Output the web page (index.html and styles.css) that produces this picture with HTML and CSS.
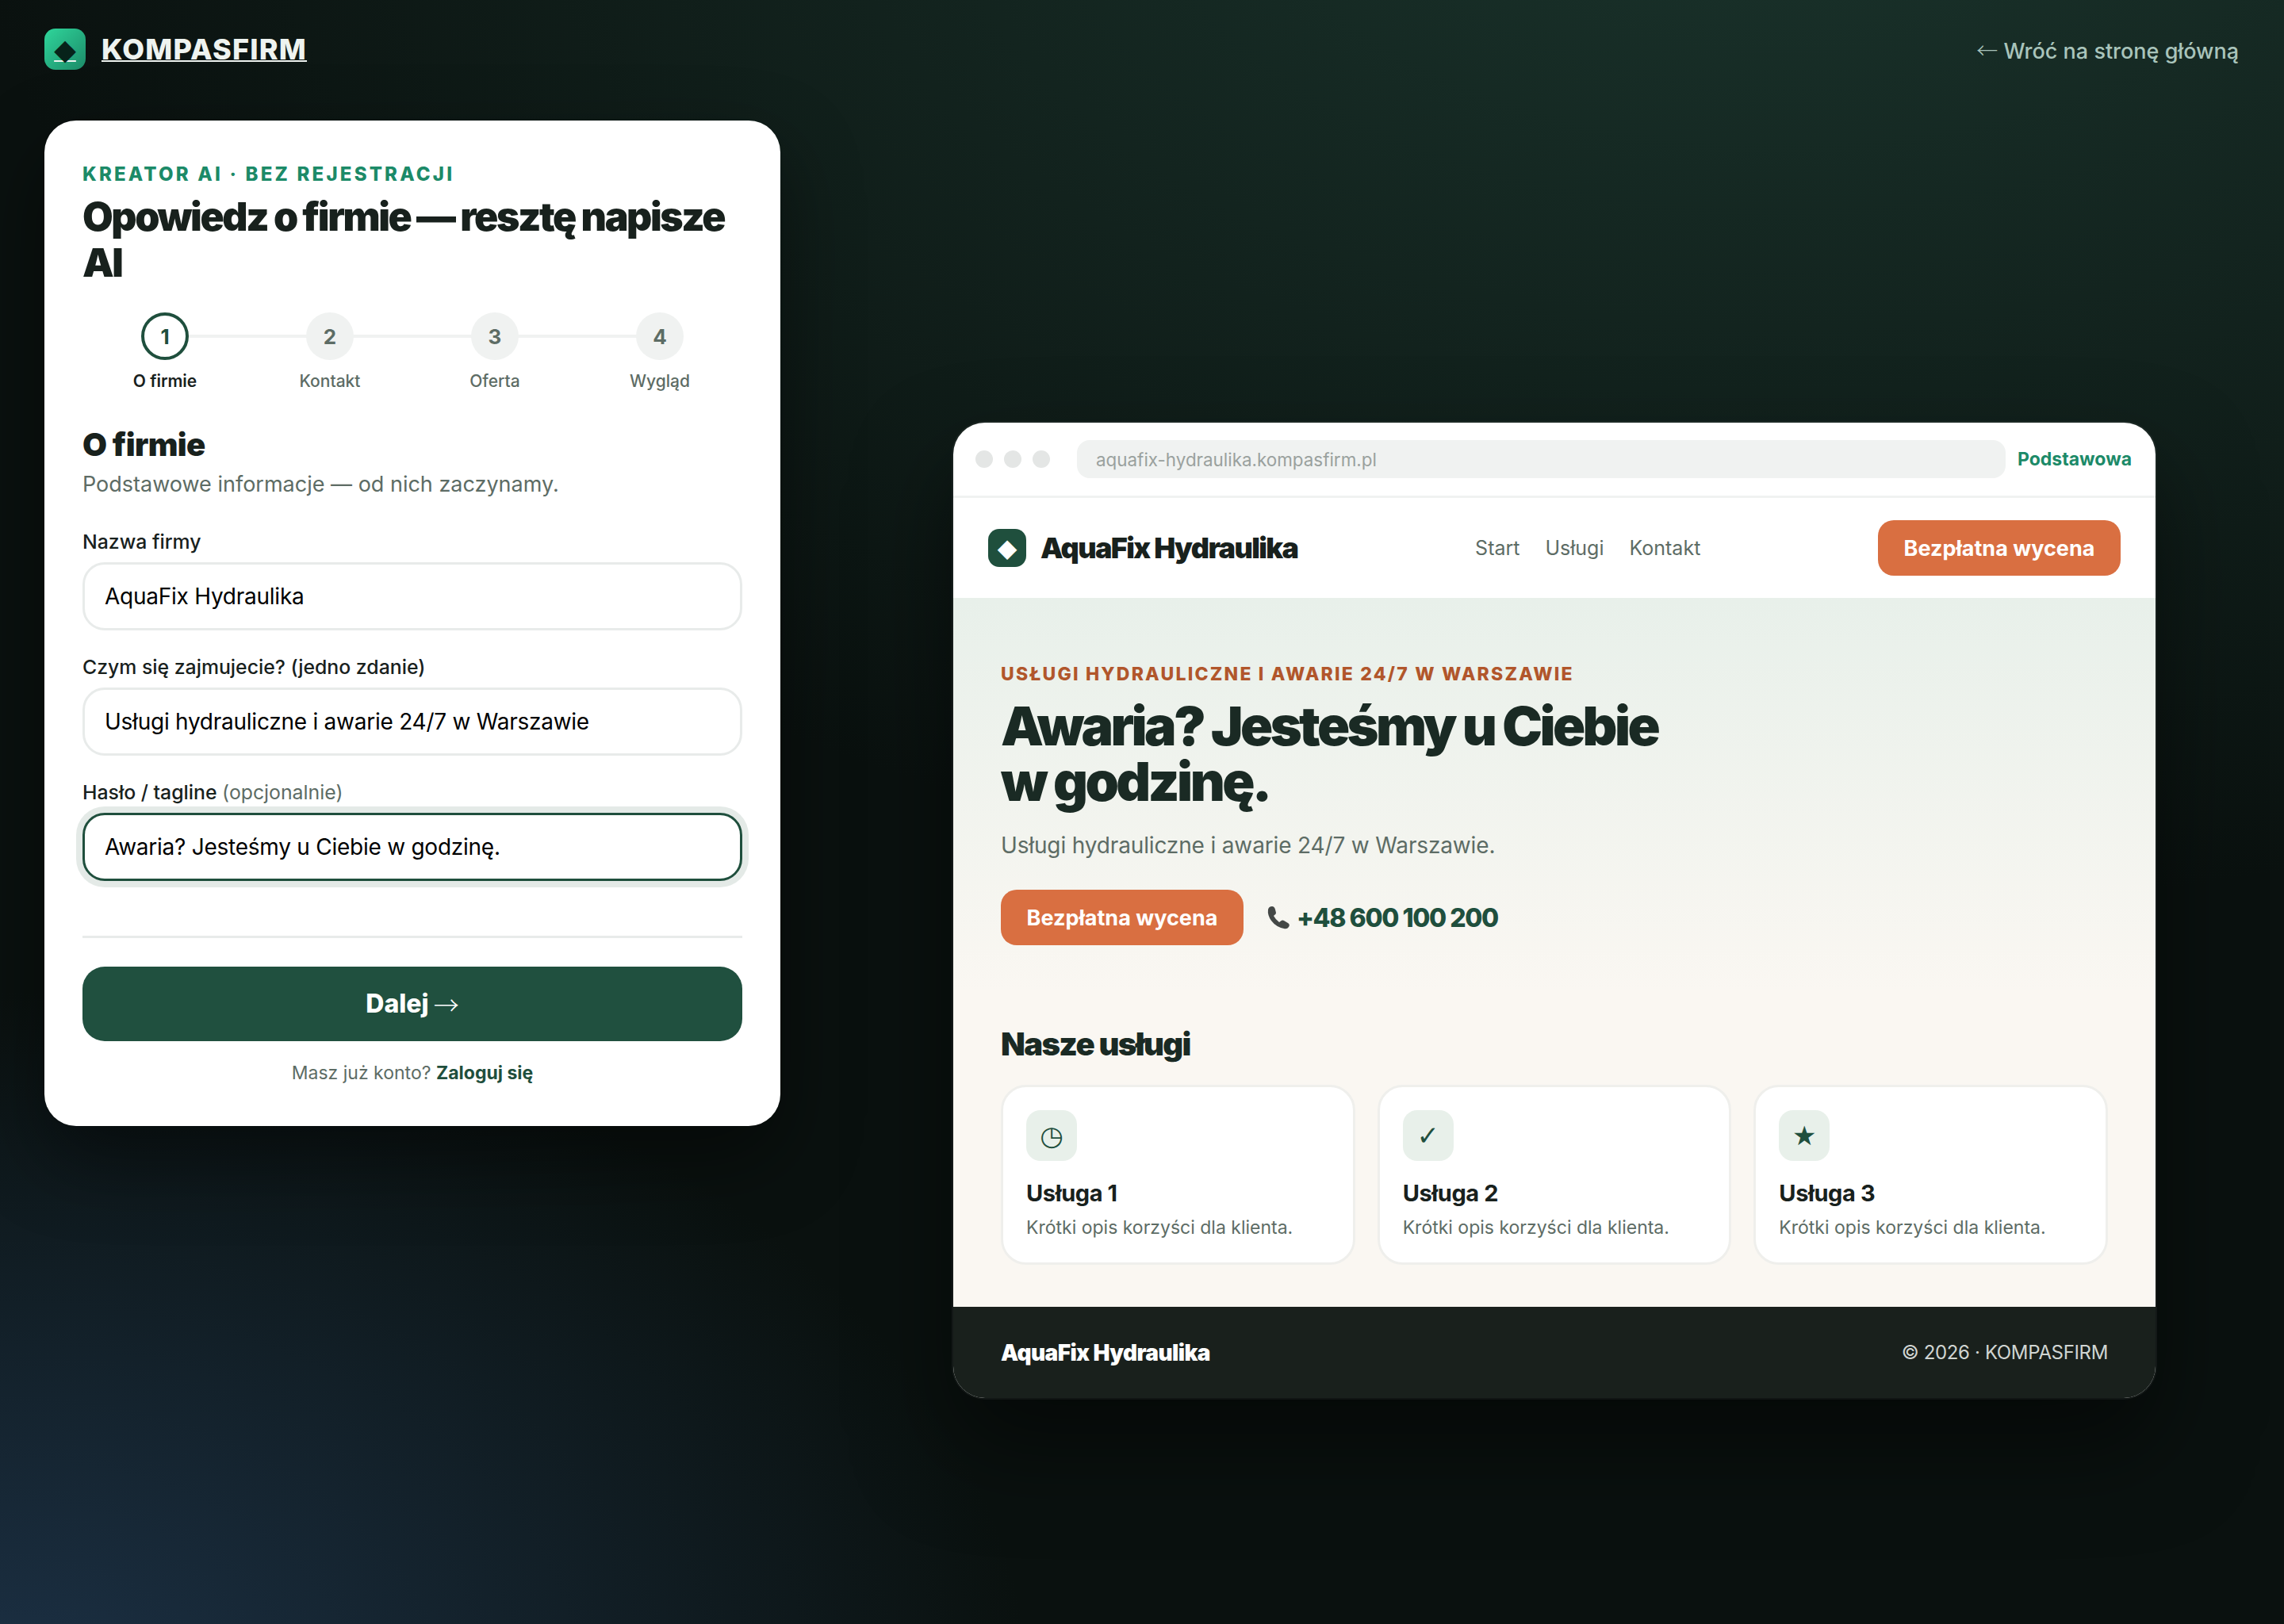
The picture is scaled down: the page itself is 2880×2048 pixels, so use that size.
FILE: index.html
```html
<!DOCTYPE html>
<html lang="pl">
<head>
<meta charset="utf-8">
<title>KOMPASFIRM — Kreator AI</title>
<link rel="stylesheet" href="styles.css">
</head>
<body>
<header class="topbar">
  <a class="brand" href="#"><span class="brand-icon">◆</span><span class="brand-name">KOMPASFIRM</span></a>
  <a class="back" href="#"><span class="arrow">←</span> Wróć na stronę główną</a>
</header>
<main class="layout">
  <section class="card">
    <div class="eyebrow">KREATOR AI · BEZ REJESTRACJI</div>
    <h1 class="card-title">Opowiedz o firmie — resztę napisze AI</h1>
    <ol class="steps">
      <li class="step active"><span class="dot">1</span><span class="step-label">O firmie</span></li>
      <li class="step"><span class="dot">2</span><span class="step-label">Kontakt</span></li>
      <li class="step"><span class="dot">3</span><span class="step-label">Oferta</span></li>
      <li class="step"><span class="dot">4</span><span class="step-label">Wygląd</span></li>
    </ol>
    <h2 class="section-title">O firmie</h2>
    <p class="section-sub">Podstawowe informacje — od nich zaczynamy.</p>
    <div class="field"><div class="field-label">Nazwa firmy</div><div class="input">AquaFix Hydraulika</div></div>
    <div class="field"><div class="field-label">Czym się zajmujecie? (jedno zdanie)</div><div class="input">Usługi hydrauliczne i awarie 24/7 w Warszawie</div></div>
    <div class="field"><div class="field-label">Hasło / tagline <span class="optional">(opcjonalnie)</span></div><div class="input focus">Awaria? Jesteśmy u Ciebie w godzinę.</div></div>
    <hr class="divider">
    <button class="next">Dalej <span class="arrow">→</span></button>
    <p class="login">Masz już konto? <a href="#">Zaloguj się</a></p>
  </section>

  <section class="window">
    <div class="chrome">
      <div class="dots"><i></i><i></i><i></i></div>
      <div class="url">aquafix-hydraulika.kompasfirm.pl</div>
      <div class="plan">Podstawowa</div>
    </div>
    <nav class="site-nav">
      <div class="site-brand"><span class="site-icon">◆</span>AquaFix Hydraulika</div>
      <div class="site-links"><span>Start</span><span>Usługi</span><span>Kontakt</span></div>
      <a class="cta" href="#">Bezpłatna wycena</a>
    </nav>
    <div class="hero">
      <div class="hero-eyebrow">USŁUGI HYDRAULICZNE I AWARIE 24/7 W WARSZAWIE</div>
      <h2 class="hero-title">Awaria? Jesteśmy u Ciebie<br>w godzinę.</h2>
      <p class="hero-sub">Usługi hydrauliczne i awarie 24/7 w Warszawie.</p>
      <div class="hero-actions">
        <a class="cta" href="#">Bezpłatna wycena</a>
        <span class="phone"><svg class="phone-icon" viewBox="0 0 30 30"><path d="M2 5Q3 1 7 1Q10 1 11 5L12 9Q12 11 10 12L9 13Q11 17 16 21L18 19.500Q20 18 22 19L27 22Q30 24 28 27Q26 30 22 29Q12 27 6 19Q1 12 2 5Z"/></svg>+48 600 100 200</span>
      </div>
    </div>
    <div class="services">
      <h3 class="services-title">Nasze usługi</h3>
      <div class="service-grid">
        <article class="service"><div class="service-icon">◷</div><h4>Usługa 1</h4><p>Krótki opis korzyści dla klienta.</p></article>
        <article class="service"><div class="service-icon">✓</div><h4>Usługa 2</h4><p>Krótki opis korzyści dla klienta.</p></article>
        <article class="service"><div class="service-icon">★</div><h4>Usługa 3</h4><p>Krótki opis korzyści dla klienta.</p></article>
      </div>
    </div>
    <footer class="site-footer"><strong>AquaFix Hydraulika</strong><span>© 2026 · KOMPASFIRM</span></footer>
  </section>
</main>
</body>
</html>
```
FILE: styles.css
```css
* { box-sizing: border-box; }
html, body { margin: 0; }
body {
  width: 2880px;
  height: 2048px;
  overflow: hidden;
  font-family: "Inter", "DejaVu Sans", sans-serif;
  color: #18211d;
  background:
    radial-gradient(2300px 1400px at 78% -12%, #1b352d 0%, rgba(27,53,45,0) 100%),
    radial-gradient(1300px 900px at 0% 105%, #1c3146 0%, rgba(28,49,70,0) 100%),
    #0a110f;
}
a { color: inherit; text-decoration: none; }
h1, h2, h3, h4, p, ol { margin: 0; padding: 0; }

.topbar { display: flex; justify-content: space-between; align-items: center; height: 124px; padding: 0 57px 0 56px; }
.brand { display: flex; align-items: center; gap: 20px; color: #eef3f0; text-decoration: underline; text-decoration-thickness: 2px; font-weight: 800; font-size: 36px; letter-spacing: 1.2px; }
.brand-icon { width: 52px; height: 52px; border-radius: 14px; background: linear-gradient(135deg, #2fd69b, #1c8a68); display: flex; align-items: center; justify-content: center; color: #07231a; font-family: "DejaVu Sans", sans-serif; font-size: 36px; letter-spacing: 0; }
.back { font-size: 27px; color: #a9c4bb; font-weight: 500; }
.arrow { font-family: "Noto Sans CJK JP", sans-serif; font-weight: 300; }

.layout { display: flex; align-items: flex-start; gap: 218px; padding: 28px 0 0 56px; }

.card { width: 928px; flex: none; background: #fff; border-radius: 40px; padding: 48px 48px 50px; box-shadow: 0 40px 100px rgba(0,0,0,.45); }
.eyebrow { font-size: 24px; line-height: 40px; font-weight: 800; color: #1c8a68; letter-spacing: 3.2px; }
.card-title { margin-top: 4px; font-size: 50px; line-height: 58px; font-weight: 900; letter-spacing: -2.4px; color: #18211d; }
.steps { list-style: none; display: grid; grid-template-columns: repeat(4, 1fr); margin-top: 34px; }
.step { position: relative; display: flex; flex-direction: column; align-items: center; gap: 12px; }
.step + .step::before { content: ""; position: absolute; left: -50%; right: 50%; top: 28px; height: 4px; background: #f0f2f1; }
.dot { position: relative; z-index: 1; width: 60px; height: 60px; border-radius: 50%; background: #f0f2f1; color: #5d6c65; display: flex; align-items: center; justify-content: center; font-size: 26px; font-weight: 700; }
.step.active .dot { background: #fff; border: 4px solid #1f4f3d; color: #1f4f3d; }
.step-label { font-size: 21px; line-height: 30px; font-weight: 500; color: #5d6c65; }
.step.active .step-label { color: #18211d; font-weight: 600; }
.section-title { margin-top: 43px; font-size: 40px; line-height: 44px; font-weight: 900; letter-spacing: -.6px; }
.section-sub { margin-top: 10px; font-size: 27px; line-height: 36px; color: #5d6c65; }
.field { margin-bottom: 30px; }
.section-sub + .field { margin-top: 38px; }
.field-label { font-size: 24.8px; line-height: 32px; font-weight: 500; margin-bottom: 10px; color: #18211d; }
.optional { color: #5d6c65; font-weight: 400; }
.input { height: 86px; border: 3px solid #e8ebea; border-radius: 28px; padding: 0 25px 0; display: flex; align-items: center; font-size: 28px; letter-spacing: -.25px; color: #000; background: #fff; }
.input.focus { border-color: #1f4f3d; box-shadow: 0 0 0 8px rgba(31,79,61,.12); }
.divider { border: 0; height: 3px; background: #e8ebea; margin: 69px 0 0; }
.next { display: flex; align-items: center; justify-content: center; gap: 6px; width: 100%; height: 94px; padding-bottom: 2px; margin: 36px 0 2px; border: 0; border-radius: 28px; background: #20503f; color: #fff; font-family: inherit; font-size: 32px; font-weight: 800; }
.login { margin-top: 23px; text-align: center; font-size: 23px; line-height: 34px; color: #5d6c65; }
.login a { font-weight: 700; color: #1f4f3d; }

.window { width: 1516px; flex: none; margin-top: 381px; border-radius: 40px; overflow: hidden; background: #fff; box-shadow: 0 0 0 2px rgba(255,255,255,.05), 0 60px 120px rgba(0,0,0,.5); }
.chrome { display: flex; align-items: center; height: 95px; padding: 0 30px 0 28px; border-bottom: 3px solid #f0f2f1; }
.dots { display: flex; gap: 14px; margin-right: 34px; }
.dots i { display: block; width: 22px; height: 22px; border-radius: 50%; background: #e4e6e5; }
.url { flex: 1; height: 48px; border-radius: 16px; background: #f0f2f1; padding: 0 24px; display: flex; align-items: center; font-size: 22.400px; color: #9aa19e; margin-right: 15px; }
.plan { font-size: 23px; font-weight: 700; color: #1c8a68; }
.site-nav { height: 126px; display: flex; align-items: center; justify-content: space-between; padding: 0 44px; background: #fff; }
.site-brand { display: flex; align-items: center; gap: 18px; font-size: 36px; font-weight: 900; letter-spacing: -1.6px; }
.site-icon { width: 48px; height: 48px; border-radius: 14px; background: #1f4f3d; color: #fff; display: flex; align-items: center; justify-content: center; font-family: "DejaVu Sans", sans-serif; font-size: 32px; letter-spacing: 0; }
.site-links { display: flex; gap: 32px; font-size: 25px; color: #5d6c65; }
.cta { display: inline-flex; align-items: center; justify-content: center; width: 306px; height: 70px; border-radius: 20px; background: #d96f41; color: #fff; font-size: 27px; font-weight: 700; }
.hero { height: 498px; padding: 78px 60px 0; background: linear-gradient(180deg, #e8f0ea, #faf7f2); }
.hero-eyebrow { font-size: 23px; line-height: 36px; font-weight: 800; color: #b1562b; letter-spacing: 2.2px; }
.hero-title { margin-top: 12px; font-size: 68px; line-height: 70px; font-weight: 900; letter-spacing: -3.6px; color: #1a2a24; }
.hero-sub { margin-top: 24px; font-size: 28px; line-height: 44px; letter-spacing: -.15px; color: #5d6c65; }
.hero-actions { display: flex; align-items: center; gap: 29px; margin-top: 34px; }
.phone { display: flex; align-items: center; gap: 8px; font-size: 32px; font-weight: 800; letter-spacing: -1.400px; color: #1f4f3d; }
.phone-icon { width: 30px; height: 30px; fill: #444846; }
.services { height: 396px; padding: 41px 60px 0; background: #faf7f2; }
.services-title { font-size: 40px; line-height: 48px; font-weight: 900; letter-spacing: -1.6px; color: #1a2a24; }
.service-grid { display: grid; grid-template-columns: repeat(3, 1fr); gap: 28px; margin-top: 27px; }
.service { height: 227px; padding: 29px 29px 0; background: #fff; border: 3px solid #efefec; border-radius: 32px; }
.service-icon { width: 64px; height: 64px; border-radius: 18px; background: #e8f0ea; color: #1f4f3d; display: flex; align-items: center; justify-content: center; font-family: "DejaVu Sans", sans-serif; font-size: 34px; }
.service h4 { margin-top: 21px; font-size: 29px; line-height: 40px; font-weight: 700; letter-spacing: -.4px; color: #18211d; }
.service p { margin-top: 5px; font-size: 23px; line-height: 36px; color: #5d6c65; }
.site-footer { height: 115px; display: flex; align-items: center; justify-content: space-between; padding: 0 60px; background: #19201c; color: #d0d5d2; font-size: 24px; letter-spacing: -.35px; }
.site-footer strong { color: #fff; font-size: 28px; font-weight: 900; letter-spacing: -.6px; }
```
